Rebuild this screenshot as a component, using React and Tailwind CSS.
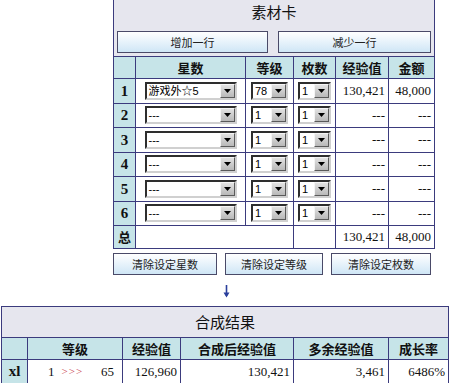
const cell = "border border-[#3b3b7d]";
const head = `${cell} bg-[#c6e4e8] text-center font-bold text-[13px] p-0`;
const num = `${cell} text-right pr-[3px] p-0 font-['Liberation_Serif',serif] text-[13px]`;
const idx = `${cell} bg-[#c6e4e8] text-center p-0 font-['Liberation_Serif',serif] font-bold text-[15px]`;

function Select({ className, value }) {
  return (
    <div className={`mx-auto flex h-[18px] bg-white border-2 border-t-[#2e2e2e] border-l-[#2e2e2e] border-r-[#d0d0d0] border-b-[#d0d0d0] ${className}`}>
      <span className="flex-1 overflow-hidden whitespace-nowrap pl-[2px] text-left text-[11px] leading-[14px] text-black font-['Liberation_Sans','Noto_Sans_CJK_SC',sans-serif]">
        {value}
      </span>
      <span className="flex w-[15px] items-center justify-center border border-t-[#f4f4f4] border-l-[#f4f4f4] border-r-[#5a5a5a] border-b-[#5a5a5a] bg-linear-to-b from-[#e2e2e2] to-[#b8b8b8]">
        <svg width="7" height="4" viewBox="0 0 7 4">
          <path d="M0 0h7L3.5 4z" fill="#000" />
        </svg>
      </span>
    </div>
  );
}

function Btn({ className, children }) {
  return (
    <div className={`flex h-[22px] items-center justify-center border border-[#4a4a68] bg-linear-to-b from-[#ffffff] to-[#cfe6f6] text-[11px] text-[#222] ${className}`}>
      {children}
    </div>
  );
}

const rows = [
  { n: 1, star: "游戏外☆5", lv: "78", cnt: "1", exp: "130,421", gold: "48,000" },
  { n: 2, star: "---", lv: "1", cnt: "1", exp: "---", gold: "---" },
  { n: 3, star: "---", lv: "1", cnt: "1", exp: "---", gold: "---" },
  { n: 4, star: "---", lv: "1", cnt: "1", exp: "---", gold: "---" },
  { n: 5, star: "---", lv: "1", cnt: "1", exp: "---", gold: "---" },
  { n: 6, star: "---", lv: "1", cnt: "1", exp: "---", gold: "---" },
];

export default function App() {
  return (
    <div className="h-[383px] w-[450px] overflow-hidden bg-white text-[#111] font-['Noto_Sans_CJK_SC',sans-serif]">
      <table className="ml-[113px] w-[321px] table-fixed border-collapse">
        <colgroup>
          <col className="w-[22px]" />
          <col className="w-[110px]" />
          <col className="w-[48px]" />
          <col className="w-[42px]" />
          <col className="w-[53px]" />
          <col className="w-[46px]" />
        </colgroup>
        <tbody>
          <tr>
            <td colSpan={6} className={`${cell} border-t-0 bg-[#e6e6ee] p-0`}>
              <div className="h-[31px] pt-[3px] text-center text-[15px] leading-[18px]">素材卡</div>
              <div className="flex justify-between px-[3px] pb-[3px]">
                <Btn className="w-[151px]">增加一行</Btn>
                <Btn className="w-[153px]">减少一行</Btn>
              </div>
            </td>
          </tr>
          <tr className="h-[22px]">
            <td className={head}></td>
            <td className={head}>星数</td>
            <td className={head}>等级</td>
            <td className={head}>枚数</td>
            <td className={head}>经验值</td>
            <td className={head}>金额</td>
          </tr>
          {rows.map((r) => (
            <tr key={r.n} className="h-[24.5px]">
              <td className={idx}>{r.n}</td>
              <td className={`${cell} p-0`}>
                <Select className="w-[92px]" value={r.star} />
              </td>
              <td className={`${cell} p-0`}>
                <Select className="w-[37px]" value={r.lv} />
              </td>
              <td className={`${cell} p-0`}>
                <Select className="w-[33px]" value={r.cnt} />
              </td>
              <td className={num}>{r.exp}</td>
              <td className={num}>{r.gold}</td>
            </tr>
          ))}
          <tr className="h-[23px]">
            <td className={`${cell} bg-[#c6e4e8] text-center p-0 font-bold text-[13px]`}>总</td>
            <td colSpan={2} className={`${cell} p-0`}></td>
            <td className={`${cell} p-0`}></td>
            <td className={num}>130,421</td>
            <td className={num}>48,000</td>
          </tr>
        </tbody>
      </table>

      <div className="ml-[113px] mt-[4px] flex gap-[8px]">
        <Btn className="w-[104px]">清除设定星数</Btn>
        <Btn className="w-[98px]">清除设定等级</Btn>
        <Btn className="w-[100px]">清除设定枚数</Btn>
      </div>

      <div className="flex h-[31px] justify-center pl-[2px] pt-[10px]">
        <svg width="7" height="13" viewBox="0 0 7 13">
          <path d="M3.5 0v11" stroke="#2a3f9c" strokeWidth="1.6" />
          <path d="M0.5 7.5L3.5 12.5L6.5 7.5z" fill="#2a3f9c" />
        </svg>
      </div>

      <table className="ml-[1px] w-[447px] table-fixed border-collapse">
        <colgroup>
          <col className="w-[26px]" />
          <col className="w-[95px]" />
          <col className="w-[58px]" />
          <col className="w-[113px]" />
          <col className="w-[95px]" />
          <col className="w-[60px]" />
        </colgroup>
        <tbody>
          <tr className="h-[31px]">
            <td colSpan={6} className={`${cell} bg-[#e6e6ee] p-0 text-center text-[15px]`}>合成结果</td>
          </tr>
          <tr className="h-[22px]">
            <td className={head}></td>
            <td className={head}>等级</td>
            <td className={head}>经验值</td>
            <td className={head}>合成后经验值</td>
            <td className={head}>多余经验值</td>
            <td className={head}>成长率</td>
          </tr>
          <tr className="h-[21px]">
            <td className={idx}>xl</td>
            <td className={`${cell} p-0 font-['Liberation_Serif',serif] text-[13px]`}>
              <div className="flex items-center pl-[20px] pr-[8px]">
                <span>1</span>
                <span className="ml-[7px] text-[11px] tracking-[1px] text-[#c8404e]">&gt;&gt;&gt;</span>
                <span className="ml-auto">65</span>
              </div>
            </td>
            <td className={num}>126,960</td>
            <td className={num}>130,421</td>
            <td className={num}>3,461</td>
            <td className={num}>6486%</td>
          </tr>
        </tbody>
      </table>
    </div>
  );
}
